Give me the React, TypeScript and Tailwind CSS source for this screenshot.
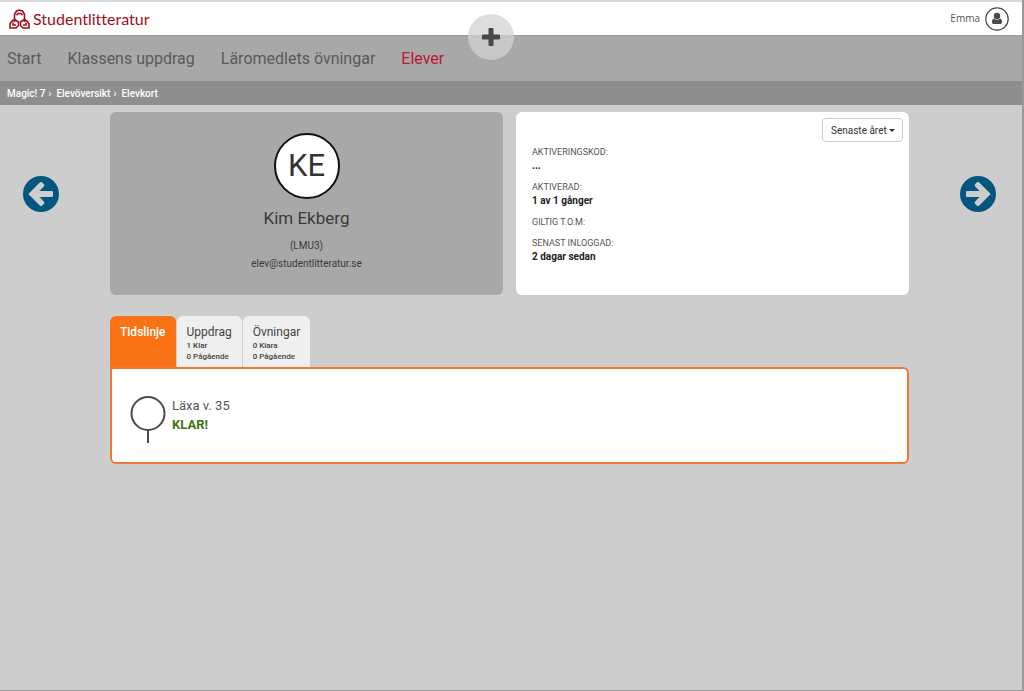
import type { ReactNode } from "react";

const navLinks = [
  { name: "Start", active: false },
  { name: "Klassens uppdrag", active: false },
  { name: "Läromedlets övningar", active: false },
  { name: "Elever", active: true },
];

const crumbs = ["Magic! 7", "Elevöversikt", "Elevkort"];

const details = [
  { label: "Aktiveringskod:", value: "..." },
  { label: "Aktiverad:", value: "1 av 1 gånger" },
  { label: "Giltig t.o.m:", value: "" },
  { label: "Senast inloggad:", value: "2 dagar sedan" },
];

const tabs = [
  { name: "Tidslinje", stats: [], active: true },
  { name: "Uppdrag", stats: ["1 Klar", "0 Pågående"], active: false },
  { name: "Övningar", stats: ["0 Klara", "0 Pågående"], active: false },
];

const Logo = () => (
  <a href="#" className="flex items-center gap-[3px] text-[#a01018]">
    <svg width="21" height="20" viewBox="0 0 21 20" fill="none" stroke="currentColor" strokeWidth="1.6" strokeLinejoin="miter">
      <path d="M5.500 13V5.500L7.500 2 10.500 1l3 1 2 3.500V13" />
      <path d="M7.500 6.200L9 4.500h3l1.500 1.700" />
      <path d="M5.500 10.500L2.500 12.500 1 15v4h6l2.500-2.500V13L5.500 10.500" />
      <path d="M15.500 10.500l3 2L20 15v4h-6l-2.500-2.500V13l4-2.500" />
      <path d="M4 13.500V16h3M17 13.500V16h-3" />
    </svg>
    <span className="font-[Lato,sans-serif] text-[16px] leading-5 [font-variant-ligatures:none]">Studentlitteratur</span>
  </a>
);

const Header = () => (
  <header className="relative">
    <div className="flex h-[33px] items-center justify-between bg-white pr-[13px] pl-[9px]">
      <Logo />
      <button className="flex items-center gap-[5px] font-['Open_Sans',sans-serif] text-[10px] text-[#555]">
        Emma
        <svg width="24" height="24" viewBox="0 0 24 24">
          <circle cx="12" cy="12" r="11.200" fill="none" stroke="#444" strokeWidth="1.200" />
          <circle cx="12" cy="9" r="3.200" fill="#4a4a4a" />
          <path d="M9 11.500c-1.500.5-2 1.800-2 3.500 0 1.600.7 2 2 2h6c1.300 0 2-.4 2-2 0-1.700-.5-3-2-3.500-.8.800-1.800 1.200-3 1.200s-2.200-.4-3-1.200z" fill="#4a4a4a" />
        </svg>
      </button>
    </div>
    <nav className="flex h-[46px] items-center gap-[26px] border-t border-[#9c9c9c] bg-[#a8a8a8] pl-[7px] text-base text-[#5a5a5a]">
      {navLinks.map(link => (
        <a key={link.name} href="#" className={link.active ? "text-[#bd1734]" : ""}>{link.name}</a>
      ))}
    </nav>
    <button aria-label="Lägg till" className="absolute top-3 left-[48%] flex size-[46px] -translate-x-1/2 items-center justify-center rounded-full bg-[#d2d2d2]/75">
      <svg width="18" height="18" viewBox="0 0 18 18" fill="#484848">
        <rect x="6.500" y="0" width="5" height="18" rx="1" />
        <rect x="0" y="6.500" width="18" height="5" rx="1" />
      </svg>
    </button>
    <nav className="flex h-6 items-center gap-[5px] bg-[#8e8e8e] pl-[7px] text-[10px] font-medium text-white">
      {crumbs.map((crumb, i) => (
        <span key={crumb} className="flex gap-[3px]">
          <a href="#">{crumb}</a>
          {i < crumbs.length - 1 && <span>›</span>}
        </span>
      ))}
    </nav>
  </header>
);

const ArrowButton = ({ label, flip }: { label: string; flip?: boolean }) => (
  <button aria-label={label} className={flip ? "rotate-180" : ""}>
    <svg width="36" height="36" viewBox="0 0 36 36">
      <circle cx="18" cy="18" r="18" fill="#04567e" />
      <path
        d="M6 17.200L17 6.300q1-.8 2 0l2 2q.8 1 0 2L16.500 15H29q1 0 1 1v4q0 1-1 1H16.500l4.500 4.700q.8 1 0 2l-2 2q-1 .8-2 0L6 18.800q-.8-.8 0-1.600z"
        fill="#cdcdcd"
      />
    </svg>
  </button>
);

const Side = ({ children, end }: { children: ReactNode; end?: boolean }) => (
  <div className={"flex w-[110px] shrink-0 items-start px-[23px] pt-[64px] " + (end ? "justify-end" : "")}>
    {children}
  </div>
);

const StudentCard = () => (
  <section className="flex flex-col items-center rounded-md bg-[#a8a8a8] pt-[21px] pb-[22px] text-[#3a3a3a]">
    <div className="flex size-[66px] items-center justify-center rounded-full border-2 border-[#111] bg-white text-[31px] text-[#333]">KE</div>
    <h1 className="mt-[7px] text-[17px] leading-6">Kim Ekberg</h1>
    <p className="mt-[7px] text-[10px] leading-[18px]">(LMU3)</p>
    <p className="text-[10px] leading-[18px]">elev@studentlitteratur.se</p>
  </section>
);

const InfoCard = () => (
  <section className="flex items-start justify-between rounded-md bg-white pr-[6px] pl-4">
    <dl className="pt-[33px]">
      {details.map(item => (
        <div key={item.label} className="mb-[7px]">
          <dt className="text-[9px] leading-[14px] text-[#555] uppercase">{item.label}</dt>
          {item.value && <dd className="text-[10px] leading-[14px] font-bold text-[#222]">{item.value}</dd>}
        </div>
      ))}
    </dl>
    <div className="relative mt-[6px]">
      <select aria-label="Period" className="block h-6 w-[81px] appearance-none rounded border border-[#ccc] bg-white pl-2 text-[10px] text-[#333]">
        <option>Senaste året</option>
      </select>
      <svg className="pointer-events-none absolute top-[11px] right-2" width="6" height="3" viewBox="0 0 6 3">
        <path d="M0 0h6L3 3z" fill="#333" />
      </svg>
    </div>
  </section>
);

const Tabs = () => (
  <div role="tablist" className="flex gap-px">
    {tabs.map(tab => (
      <button
        key={tab.name}
        role="tab"
        aria-selected={tab.active}
        className={
          "flex h-[51px] flex-col items-start rounded-t-md px-[10px] pt-2 text-left " +
          (tab.active ? "bg-[#f97316] text-white" : "bg-[#efefef] text-[#444]")
        }
      >
        <span className={"text-[12px] leading-4 " + (tab.active ? "font-medium" : "")}>{tab.name}</span>
        {tab.stats.map(stat => (
          <span key={stat} className="text-[8px] leading-[11px] font-medium">{stat}</span>
        ))}
      </button>
    ))}
  </div>
);

const Timeline = () => (
  <section className="flex items-start gap-[6px] rounded-md rounded-tl-none border-2 border-[#ee7a35] bg-white pt-[27px] pb-[18px] pl-[18px]">
    <svg width="36" height="48" viewBox="0 0 36 48" fill="none" stroke="#4a4a4a" strokeWidth="2">
      <circle cx="18" cy="17.500" r="16.500" />
      <path d="M18 34V47" />
    </svg>
    <div>
      <p className="text-[13px] leading-5 text-[#555]">Läxa v. 35</p>
      <p className="text-[13px] leading-[18px] font-bold text-[#437512]">KLAR!</p>
    </div>
  </section>
);

export default function App() {
  return (
    <div className="min-h-screen border-r-2 border-b border-[#999] bg-[#cdcdcd] font-[Roboto,sans-serif]">
      <div className="h-[2px] bg-[#d9d9d9]" />
      <Header />
      <main className="flex pt-[7px] pr-[3px]">
        <Side>
          <ArrowButton label="Föregående elev" />
        </Side>
        <div className="min-w-0 flex-1">
          <div className="mb-[21px] grid grid-cols-2 gap-[13px]">
            <StudentCard />
            <InfoCard />
          </div>
          <Tabs />
          <Timeline />
        </div>
        <Side end>
          <ArrowButton label="Nästa elev" flip />
        </Side>
      </main>
    </div>
  );
}
